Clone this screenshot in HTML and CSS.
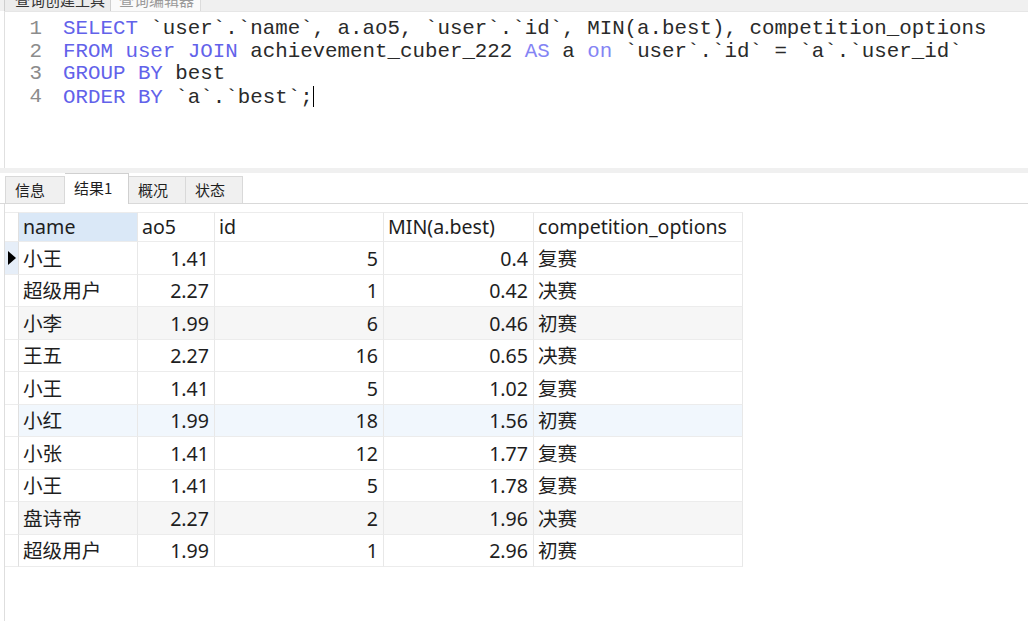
FILE: index.html
```html
<!DOCTYPE html>
<html lang="zh-CN">
<head>
<meta charset="utf-8">
<title>查询</title>
<link rel="stylesheet" href="styles.css">
</head>
<body>
<div class="app">
  <div class="doc-tabs">
    <div class="doc-tab doc-tab-first"><span>查询创建工具</span></div>
    <div class="doc-tab doc-tab-active"><span>查询编辑器</span></div>
  </div>
  <div class="editor">
    <div class="gutter">
      <div class="ln">1</div>
      <div class="ln">2</div>
      <div class="ln">3</div>
      <div class="ln">4</div>
    </div>
    <div class="code">
      <div class="line"><span class="kw">SELECT</span> `user`.`name`, a.ao5, `user`.`id`, MIN(a.best), competition_options</div>
      <div class="line"><span class="kw">FROM</span> <span class="kw">user</span> <span class="kw">JOIN</span> achievement_cuber_222 <span class="kw2">AS</span> a <span class="kw2">on</span> `user`.`id` = `a`.`user_id`</div>
      <div class="line"><span class="kw">GROUP</span> <span class="kw">BY</span> best</div>
      <div class="line"><span class="kw">ORDER</span> <span class="kw">BY</span> `a`.`best`;<span class="caret"></span></div>
    </div>
  </div>
  <div class="splitter"></div>
  <div class="result-tabs">
    <div class="rtab">信息</div>
    <div class="rtab rtab-active">结果1</div>
    <div class="rtab">概况</div>
    <div class="rtab">状态</div>
  </div>
  <div class="result-panel">
    <div class="grid">
      <div class="row head">
        <div class="cell ind"></div>
        <div class="cell sel">name</div>
        <div class="cell">ao5</div>
        <div class="cell">id</div>
        <div class="cell">MIN(a.best)</div>
        <div class="cell">competition_options</div>
      </div>
      <div class="row current">
        <div class="cell ind"><span class="tri"></span></div>
        <div class="cell">小王</div><div class="cell num">1.41</div><div class="cell num">5</div><div class="cell num">0.4</div><div class="cell">复赛</div>
      </div>
      <div class="row">
        <div class="cell ind"></div>
        <div class="cell">超级用户</div><div class="cell num">2.27</div><div class="cell num">1</div><div class="cell num">0.42</div><div class="cell">决赛</div>
      </div>
      <div class="row alt">
        <div class="cell ind"></div>
        <div class="cell">小李</div><div class="cell num">1.99</div><div class="cell num">6</div><div class="cell num">0.46</div><div class="cell">初赛</div>
      </div>
      <div class="row">
        <div class="cell ind"></div>
        <div class="cell">王五</div><div class="cell num">2.27</div><div class="cell num">16</div><div class="cell num">0.65</div><div class="cell">决赛</div>
      </div>
      <div class="row">
        <div class="cell ind"></div>
        <div class="cell">小王</div><div class="cell num">1.41</div><div class="cell num">5</div><div class="cell num">1.02</div><div class="cell">复赛</div>
      </div>
      <div class="row hover">
        <div class="cell ind"></div>
        <div class="cell">小红</div><div class="cell num">1.99</div><div class="cell num">18</div><div class="cell num">1.56</div><div class="cell">初赛</div>
      </div>
      <div class="row">
        <div class="cell ind"></div>
        <div class="cell">小张</div><div class="cell num">1.41</div><div class="cell num">12</div><div class="cell num">1.77</div><div class="cell">复赛</div>
      </div>
      <div class="row">
        <div class="cell ind"></div>
        <div class="cell">小王</div><div class="cell num">1.41</div><div class="cell num">5</div><div class="cell num">1.78</div><div class="cell">复赛</div>
      </div>
      <div class="row alt">
        <div class="cell ind"></div>
        <div class="cell">盘诗帝</div><div class="cell num">2.27</div><div class="cell num">2</div><div class="cell num">1.96</div><div class="cell">决赛</div>
      </div>
      <div class="row">
        <div class="cell ind"></div>
        <div class="cell">超级用户</div><div class="cell num">1.99</div><div class="cell num">1</div><div class="cell num">2.96</div><div class="cell">初赛</div>
      </div>
    </div>
  </div>
</div>
</body>
</html>
```

FILE: styles.css
```css
html, body {
  margin: 0;
  padding: 0;
  background: #ffffff;
}

.app {
  width: 1028px;
  height: 621px;
  overflow: hidden;
  display: flex;
  flex-direction: column;
  font-family: "Noto Sans", "Noto Sans CJK SC", sans-serif;
  color: #1e1e1e;
}

/* top document tabs (mostly scrolled out of view) */
.doc-tabs {
  height: 11px;
  flex: 0 0 11px;
  background: #f0f0f0;
  display: flex;
  padding-left: 4px;
  overflow: hidden;
}

.doc-tab {
  height: 11px;
  overflow: hidden;
  font-family: "Noto Sans CJK SC", sans-serif;
  font-size: 15px;
  line-height: 18px;
  box-sizing: border-box;
}

.doc-tab span {
  display: block;
  margin-top: -9px;
}

.doc-tab-first {
  width: 107px;
  padding-left: 10px;
  background: #ececec;
  border-right: 1px solid #cfcfcf;
  border-left: 1px solid #cfcfcf;
  color: #333333;
}

.doc-tab-active {
  width: 90px;
  padding-left: 8px;
  background: #fafafa;
  border-right: 1px solid #dcdcdc;
  color: #9a9a9a;
}

/* SQL editor */
.editor {
  flex: 0 0 157px;
  display: flex;
  overflow: hidden;
  margin-left: 4px;
  border-left: 1px solid #e0e0e0;
  border-top: 1px solid #e6e6e6;
  padding-top: 6px;
  box-sizing: border-box;
  font-family: "Liberation Mono", "Courier New", monospace;
  font-size: 20.8px;
  line-height: 22.67px;
  background: #ffffff;
}

.gutter {
  flex: 0 0 37px;
  text-align: right;
  color: #8c8c8c;
}

.code {
  flex: 0 0 auto;
  margin-left: 21px;
  color: #2a2a2a;
}

.line {
  white-space: pre;
  height: 22.67px;
}

.kw {
  color: #6262ea;
}

.kw2 {
  color: #8484f4;
}

.caret {
  display: inline-block;
  width: 1px;
  height: 21px;
  background: #000000;
  vertical-align: -4px;
}

.splitter {
  flex: 0 0 5px;
  background: #f0f0f0;
}

/* result tabs */
.result-tabs {
  flex: 0 0 31px;
  display: flex;
  align-items: flex-end;
  padding-left: 5px;
  border-bottom: 1px solid #d9d9d9;
  box-sizing: border-box;
  background: #ffffff;
}

.rtab {
  height: 27px;
  box-sizing: border-box;
  padding-left: 9px;
  font-family: "Noto Sans CJK SC", sans-serif;
  font-size: 15px;
  line-height: 25px;
  color: #1e1e1e;
  background: #f0f0f0;
  border: 1px solid #d9d9d9;
  border-bottom: none;
  border-left: none;
}

.rtab:first-child {
  width: 60px;
  border-left: 1px solid #d9d9d9;
}

.rtab:nth-child(2) {
  width: 64px;
}

.rtab:nth-child(3) {
  width: 57px;
}

.rtab:nth-child(4) {
  width: 57px;
}

.rtab-active {
  height: 31px;
  background: #ffffff;
  margin-bottom: -1px;
  line-height: 27px;
  border-top: 1px solid #d0d0d0;
  border-right: 1px solid #d0d0d0;
}

/* result grid */
.result-panel {
  flex: 1 1 auto;
  margin-left: 4px;
  border-left: 1px solid #dedede;
  padding-top: 8px;
}

.grid {
  display: flex;
  flex-direction: column;
  width: 738px;
}

.row {
  display: grid;
  grid-template-columns: 14px 119px 77px 169px 150px 209px;
  height: 32.5px;
  flex: 0 0 32.5px;
  background: #ffffff;
}

.row.head {
  height: 30px;
  flex: 0 0 30px;
}

.row.head .cell {
  border-top: 1px solid #ececec;
  padding-top: 0;
}

.row.alt {
  background: #f6f6f6;
}

.row.hover {
  background: #f1f7fd;
}

.cell {
  box-sizing: border-box;
  border-right: 1px solid #e8e8e8;
  border-bottom: 1px solid #ececec;
  padding: 2px 4px 0 4px;
  font-size: 19.6px;
  line-height: 30px;
  white-space: nowrap;
  overflow: hidden;
  display: flex;
  align-items: center;
}

.cell.num {
  justify-content: flex-end;
  padding-right: 5px;
}

.cell.sel {
  background: #dae8f7;
}

.cell.ind {
  padding: 0;
  border-right: 1px solid #e0e0e0;
  background: #ffffff;
}

.row.current .cell.ind {
  background: #e6eef8;
}

.tri {
  display: block;
  width: 0;
  height: 0;
  margin-left: 3px;
  border-top: 7px solid transparent;
  border-bottom: 7px solid transparent;
  border-left: 8px solid #000000;
}
```
